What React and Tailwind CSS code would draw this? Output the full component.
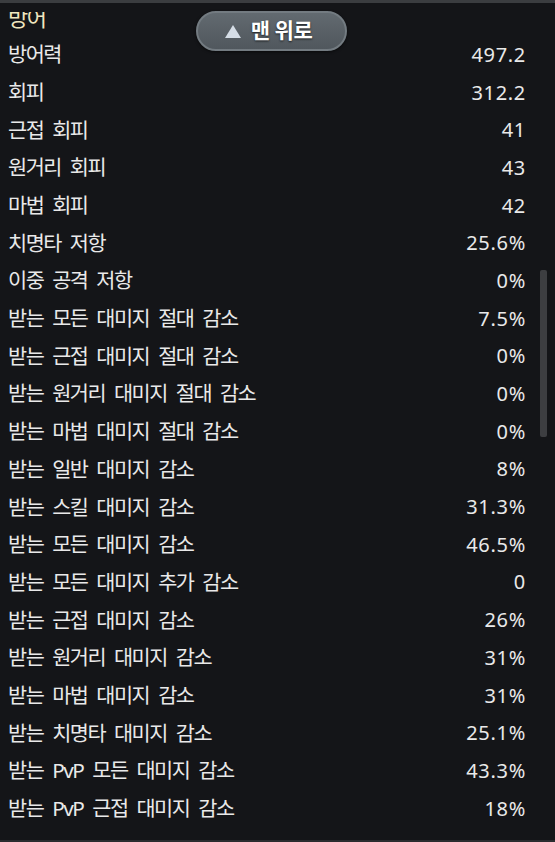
import React from "react";

const rows = [
  ["방어력", "497.2"],
  ["회피", "312.2"],
  ["근접 회피", "41"],
  ["원거리 회피", "43"],
  ["마법 회피", "42"],
  ["치명타 저항", "25.6%"],
  ["이중 공격 저항", "0%"],
  ["받는 모든 대미지 절대 감소", "7.5%"],
  ["받는 근접 대미지 절대 감소", "0%"],
  ["받는 원거리 대미지 절대 감소", "0%"],
  ["받는 마법 대미지 절대 감소", "0%"],
  ["받는 일반 대미지 감소", "8%"],
  ["받는 스킬 대미지 감소", "31.3%"],
  ["받는 모든 대미지 감소", "46.5%"],
  ["받는 모든 대미지 추가 감소", "0"],
  ["받는 근접 대미지 감소", "26%"],
  ["받는 원거리 대미지 감소", "31%"],
  ["받는 마법 대미지 감소", "31%"],
  ["받는 치명타 대미지 감소", "25.1%"],
  ["받는 PvP 모든 대미지 감소", "43.3%"],
  ["받는 PvP 근접 대미지 감소", "18%"],
];

export default function App() {
  return (
    <div
      className="relative w-[555px] h-[842px] overflow-hidden bg-[#141518] text-[#e9e9e9]"
      style={{ fontFamily: '"Noto Sans", "Noto Sans CJK KR", sans-serif' }}
    >
      <div className="h-[3px] bg-[#3b3d40]" />
      <div className="mt-[9px] h-[24px] overflow-hidden pl-[8px]">
        <div className="-mt-[11px] text-[22px] leading-[32px] tracking-[-1.5px] text-[#efe6bf]">방어</div>
      </div>
      <div className="flex flex-col">
        {rows.map(([label, value]) => (
          <div key={label} className="flex h-[37.7px] items-center justify-between pl-[8px] pr-[29px]">
            <span className="text-[20.8px] tracking-[-1.5px] [word-spacing:5px]">{label}</span>
            <span className="text-[20px] tracking-[0.7px]">{value}</span>
          </div>
        ))}
      </div>
      <div className="absolute left-[540px] top-[270px] h-[167px] w-[7px] rounded-[2px] bg-[#3d3e41]" />
      <div className="absolute left-[196px] top-[11px] flex h-[40px] w-[151px] items-center justify-center gap-[10px] rounded-full border-2 border-[#737b81] bg-gradient-to-b from-[#626a70] to-[#50575d] shadow-[0_1px_3px_rgba(0,0,0,0.6)]">
        <svg width="16" height="13" viewBox="0 0 16 13" className="-ml-[6px]">
          <polygon points="8,0 16,13 0,13" fill="#d5dde6" />
        </svg>
        <span className="text-[21px] font-bold tracking-[-0.5px] text-white [text-shadow:0_1px_2px_rgba(0,0,0,0.7)]">
          맨 위로
        </span>
      </div>
      <div className="absolute bottom-0 left-0 h-[2px] w-full bg-[#2a2c2f]" />
    </div>
  );
}
